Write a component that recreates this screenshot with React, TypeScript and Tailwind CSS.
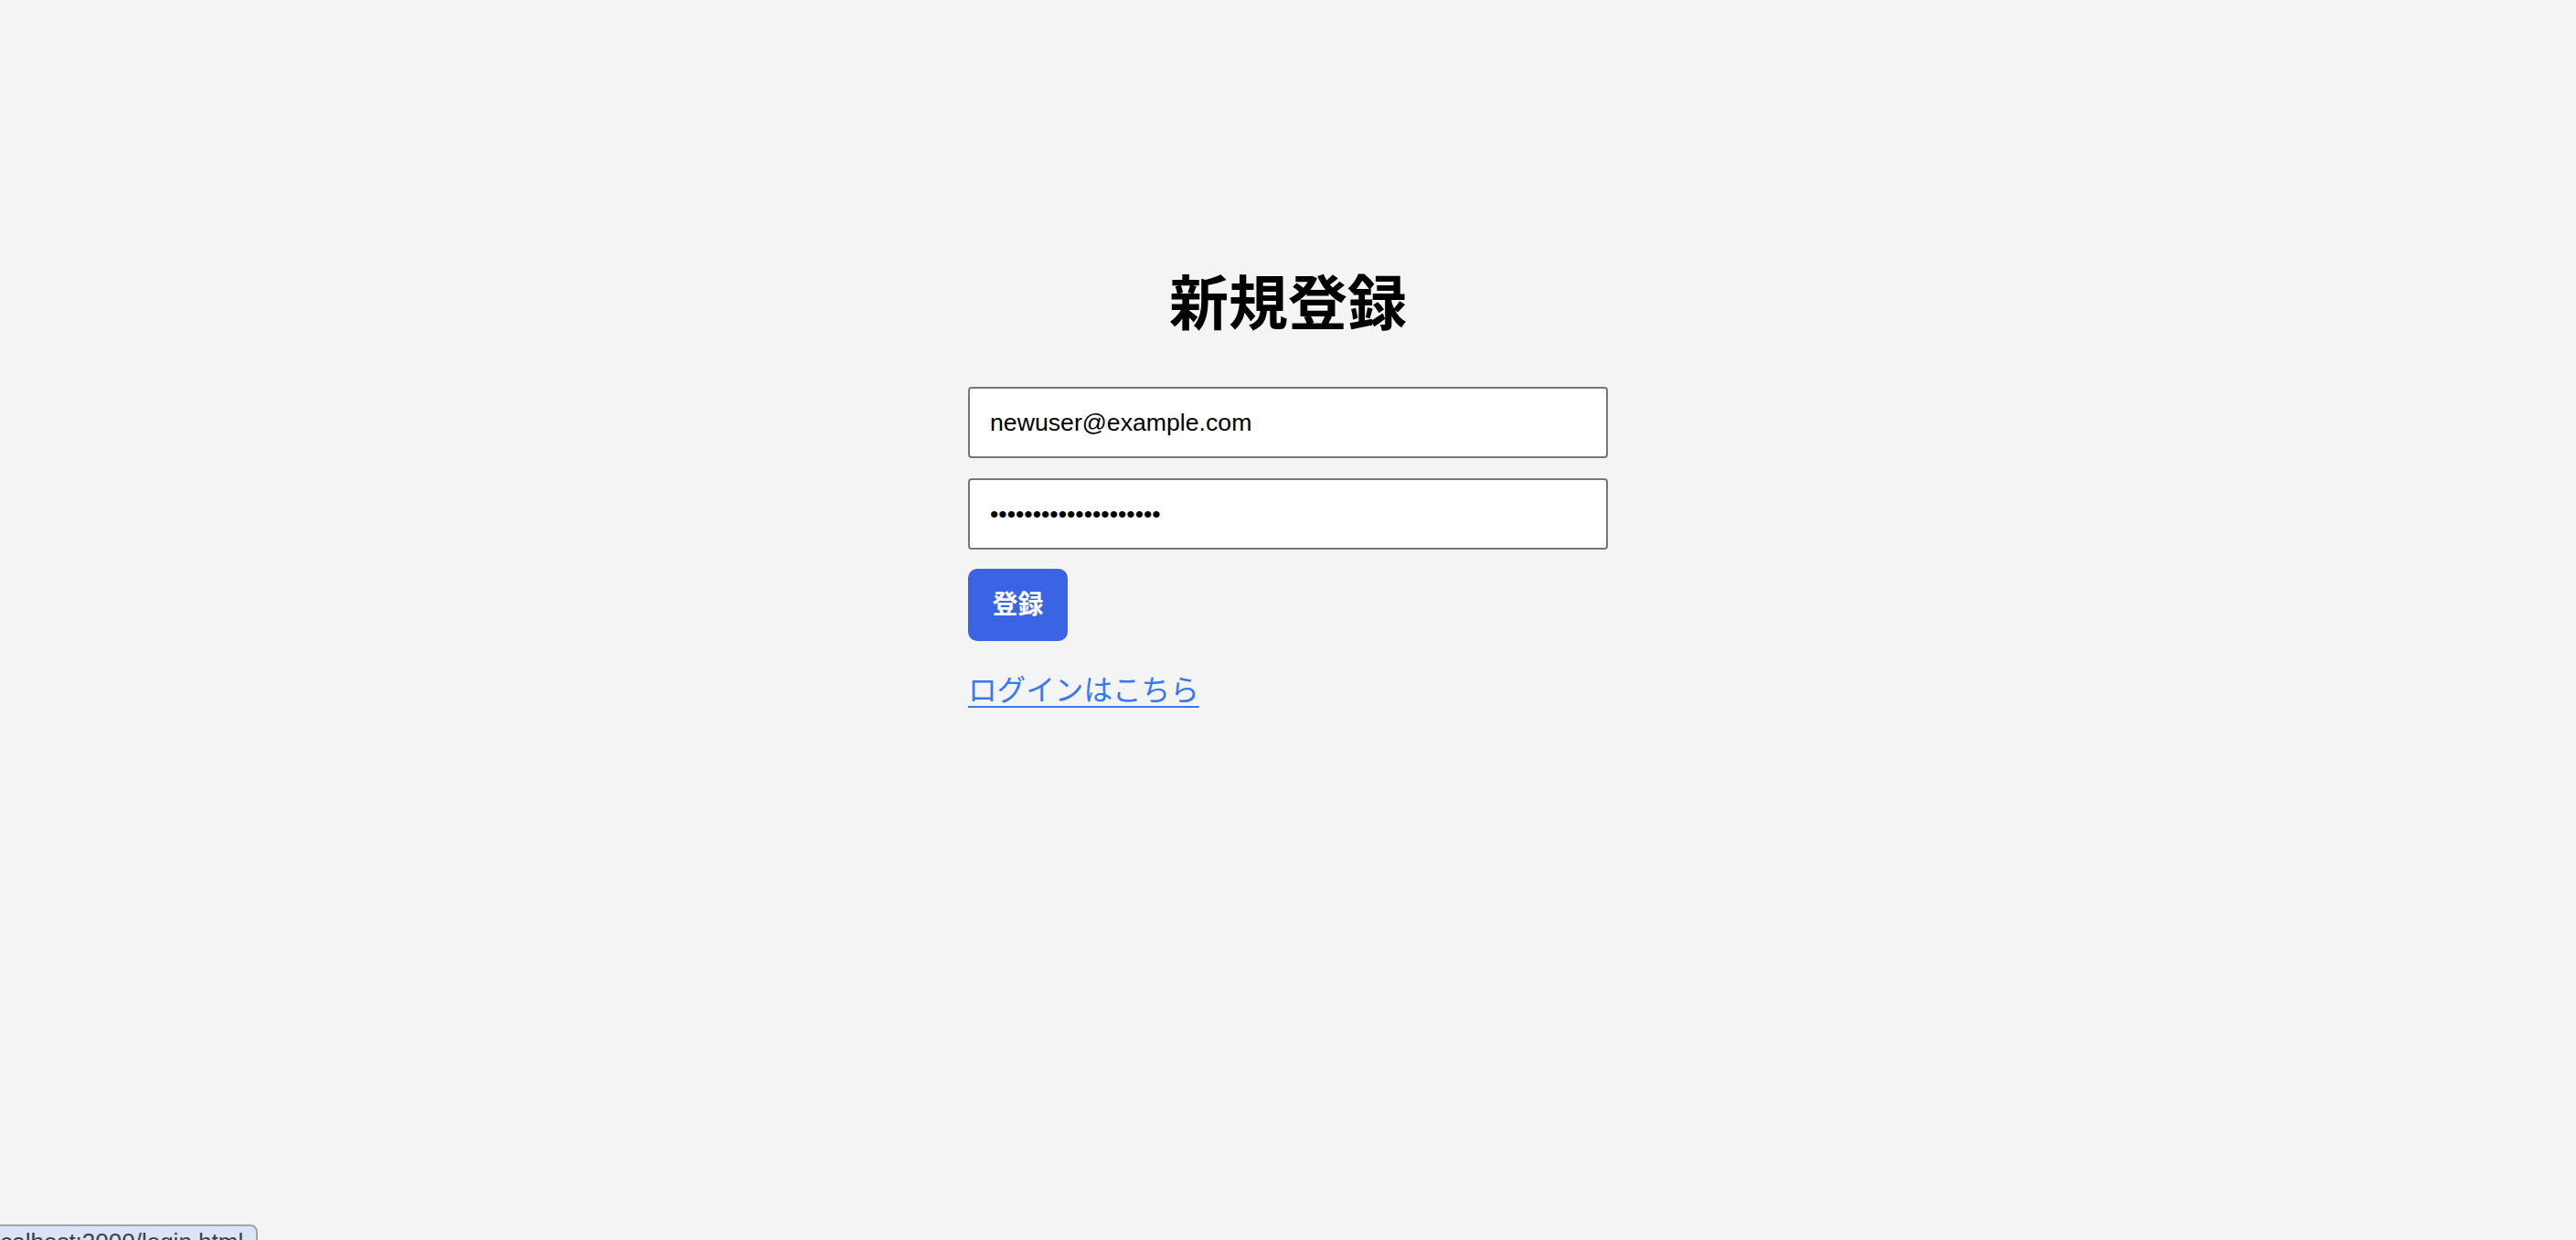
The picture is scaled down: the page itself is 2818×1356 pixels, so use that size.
import React from "react";

export default function App() {
  return (
    <div className="relative h-[1356px] w-full overflow-hidden bg-[#f4f4f4] font-['Liberation_Sans','Noto_Sans_CJK_JP',sans-serif]">
      <div className="flex flex-col items-center pt-[295px]">
        <div className="flex w-[700px] flex-col">
          <h1 className="mb-[63px] text-center font-['Noto_Sans_CJK_JP',sans-serif] text-[65px] font-bold leading-[65px] text-black">
            新規登録
          </h1>
          <input
            type="email"
            defaultValue="newuser@example.com"
            readOnly
            className="h-[78px] w-full rounded-[4px] border-2 border-[#767676] bg-white px-[22px] font-['Liberation_Sans',sans-serif] text-[26.67px] text-black outline-none"
          />
          <input
            type="password"
            defaultValue="••••••••••••••••••••"
            readOnly
            className="mt-[22px] h-[78px] w-full rounded-[4px] border-2 border-[#767676] bg-white px-[22px] font-['Liberation_Sans',sans-serif] text-[26.67px] text-black outline-none"
          />
          <div className="mt-[21px] flex">
            <button className="flex h-[79px] w-[109px] items-center justify-center rounded-[10px] bg-[#3b64e5] pb-[5px] font-['Noto_Sans_CJK_JP',sans-serif] text-[28px] font-bold text-white">
              登録
            </button>
          </div>
          <div className="mt-[28px] flex">
            <a
              href="#"
              className="font-['Noto_Sans_CJK_JP',sans-serif] text-[31.6px] leading-[46px] text-[#3478f6] underline decoration-2 underline-offset-[6px]"
            >
              ログインはこちら
            </a>
          </div>
        </div>
      </div>
      <div className="absolute bottom-[-23px] left-[-40px] h-[40px] w-[322px] rounded-tr-[8px] border-2 border-[#9ea6b6] bg-[#d9e4f8] pl-[18px] pt-[2px] font-['Liberation_Sans',sans-serif] text-[26px] leading-[31px] whitespace-nowrap text-[#3c4043]">
        localhost:3000/login.html
      </div>
    </div>
  );
}
